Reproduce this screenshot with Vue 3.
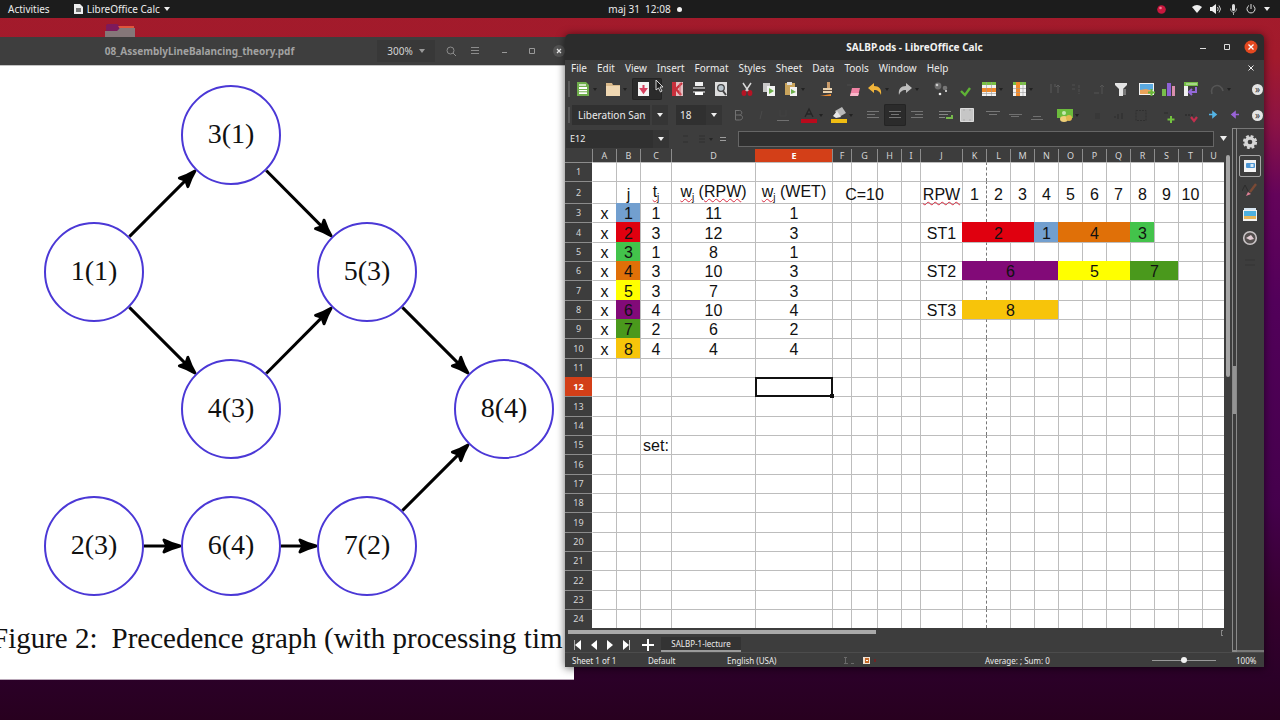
<script setup>
import { computed } from 'vue'

const R = 50
const nodes = {
  1: { x: 94, y: 272, label: '1(1)' },
  2: { x: 94, y: 546, label: '2(3)' },
  3: { x: 231, y: 135, label: '3(1)' },
  4: { x: 231, y: 409, label: '4(3)' },
  5: { x: 367, y: 272, label: '5(3)' },
  6: { x: 231, y: 546, label: '6(4)' },
  7: { x: 367, y: 546, label: '7(2)' },
  8: { x: 504, y: 409, label: '8(4)' }
}
const links = [[1, 3], [1, 4], [3, 5], [4, 5], [5, 8], [2, 6], [6, 7], [7, 8]]
const edges = computed(() => links.map(([a, b]) => {
  const p = nodes[a], q = nodes[b]
  const d = Math.hypot(q.x - p.x, q.y - p.y)
  const ux = (q.x - p.x) / d, uy = (q.y - p.y) / d
  return {
    x1: p.x + ux * R, y1: p.y + uy * R,
    x2: q.x - ux * (R + 10), y2: q.y - uy * (R + 10),
    head: `translate(${q.x - ux * (R + 1)} ${q.y - uy * (R + 1)}) rotate(${Math.atan2(uy, ux) * 180 / Math.PI})`
  }
}))

const menus = ['File', 'Edit', 'View', 'Insert', 'Format', 'Styles', 'Sheet', 'Data', 'Tools', 'Window', 'Help']

const lines = (a, b, c, d) => `<path d="M${a} 4.500H${b}M${c} 7.500H${d}M${a} 10.500H${b}" stroke="#757575" stroke-width="1"/>`
const icons = {
  bold: '<path d="M4.500 3v10M4.500 3.500h4c3 0 3 4.500 0 4.500h-4M8.500 8c4 0 4 5 0 5h-4" stroke="#727272" fill="none"/>',
  new: '<path d="M2 1h9l3 3v11H2z" fill="#6fae4c"/><path d="M4 3h7v2H4z" fill="#cfe5c2"/><path d="M4 6h8v7H4z" fill="#fff"/><path d="M4 8.500h8M4 10.800h8" stroke="#6fae4c"/>',
  open: '<path d="M1 2h6l1 2h7v11H1z" fill="#d9b98a"/><path d="M1 5h14v10H1z" fill="#efd7b2"/>',
  save: '<path d="M3 1h11v14H3z" fill="#f4f4f4"/><path d="M8.500 4v5M6 8l2.500 3.500L11 8z" stroke="#d8405f" stroke-width="2" fill="#d8405f"/>',
  pdf: '<path d="M3 1h11v14H3z" fill="#e3bfc2"/><path d="M3 1h4v14H3z" fill="#c9303c"/><path d="M13 2L7 8l5 6" stroke="#c9303c" stroke-width="2.400" fill="none"/><path d="M11 2v12" stroke="#d9606a"/>',
  print: '<path d="M4 1h8v4H4z" fill="#f0f0f0"/><path d="M2 6h12v6H2z" fill="#9a9a9a"/><path d="M2 8h12v2H2z" fill="#333"/><path d="M4 11h8v3H4z" fill="#fff"/>',
  preview: '<path d="M2 1h12v14H2z" fill="#dedede"/><circle cx="8" cy="7" r="3.300" fill="#b8c4cc" stroke="#444" stroke-width="1.300"/><path d="M10 10l3 4" stroke="#444" stroke-width="2"/>',
  cut: '<path d="M4 2l6 9M12 2L6 11" stroke="#d8d8d8" stroke-width="1.500"/><ellipse cx="5" cy="12" rx="2.400" ry="3" fill="#b51424"/><ellipse cx="11" cy="12" rx="2.400" ry="3" fill="#b51424"/>',
  copy: '<path d="M2 2h7v9H2z" fill="#c9c9c9"/><path d="M6 5h8v10H6z" fill="#f3f3f3"/><path d="M8 7l5 3-5 3z" fill="#6cae49"/>',
  paste: '<path d="M2 2h10v12H2z" fill="#c9a45c"/><path d="M4 1h5v3H4z" fill="#ddd"/><path d="M7 6h7v9H7z" fill="#f3f3f3"/><path d="M8 8l5 3-5 2z" fill="#6cae49"/>',
  clone: '<path d="M8 1h3v6H8z" fill="#c99b6a"/><path d="M4 7h9v5H4z" fill="#e8d2b0"/><path d="M4 9h9v1H4z" fill="#5a4a3a"/><path d="M1 15h11v-2z" fill="#ec8a2f"/>',
  clear: '<path d="M7 7h8l-2 8H5z" fill="#f083a4"/><path d="M6 12h8l-1 3H5z" fill="#fbb6c9"/><path d="M2 4h5" stroke="#4c4c4c"/>',
  undo: '<path d="M1 7l6-5v3c5 0 8 3 7 9-1-3-3-5-7-5v3z" fill="#f1b43a"/>',
  redo: '<path d="M15 7L9 2v3C4 5 1 8 2 14c1-3 3-5 7-5v3z" fill="#bdbdbd"/>',
  find: '<circle cx="5" cy="5" r="3.400" fill="#6e6e6e"/><circle cx="4" cy="4" r="1.300" fill="#ccc"/><circle cx="12" cy="7" r="2.300" fill="#777"/><circle cx="7" cy="13" r="1.300" fill="#eee"/><circle cx="13" cy="10" r="1" fill="#eee"/>',
  spell: '<path d="M4 10l4 4 5-7" stroke="#5fb336" stroke-width="2.400" fill="none"/>',
  row: '<path d="M1 1h14v14H1z" fill="#f2f2f2"/><path d="M1 1h14v3H1z" fill="#79c143"/><path d="M1 7h14v4H1z" fill="#f08b2c"/><path d="M5.500 1v14M10.500 1v14M1 12.500h14" stroke="#9b9b9b" stroke-width=".6"/>',
  col: '<path d="M2 1h13v14H2z" fill="#f2f2f2"/><path d="M2 1h13v3H2z" fill="#79c143"/><path d="M5 1h4v14H5z" fill="#f08b2c"/><path d="M2 7.500h13M2 11.500h13M12 1v14" stroke="#9b9b9b" stroke-width=".6"/>',
  sort: '<path d="M4 3v9M8 6V3M11 12V4M9 6l2-2 2 2" stroke="#5b5b5b" fill="none"/>',
  asc: '<path d="M3 4h3M3 8h3M10 4v9" stroke="#505050" stroke-dasharray="3 1"/>',
  desc: '<path d="M3 12h5M11 13V4M9 6l2-2 2 2" stroke="#555" fill="none"/>',
  filter: '<path d="M2 2h12v2l-4 4v7H6V8L2 4z" fill="#e4e4e4"/><path d="M10 8h3v6h-3z" fill="#777"/>',
  image: '<path d="M0 2h15v12H0z" fill="#f3f3f3"/><path d="M1 3h13v6H1z" fill="#5aa9e0"/><path d="M1 9l6-1 7 2v3H1z" fill="#e9a25a"/><path d="M12.500 8v7M9 11.500h7" stroke="#65b83a" stroke-width="2"/>',
  chart: '<path d="M1 8h4v7H1z" fill="#78bd4a"/><path d="M6 2h4v13H6z" fill="#8e62d6"/><path d="M11 5h3v10h-3z" fill="#d98fae"/>',
  pivot: '<path d="M1 1h14v4H1z" fill="#75bd46"/><path d="M1 5h4v10H1z" fill="#f0f0f0"/><path d="M3 3h11" stroke="#d7efc9"/><path d="M13 6v5H7M9 8l-3 3 3 3" stroke="#9369d8" stroke-width="2" fill="none"/>',
  omega: '<path d="M3 13c-3-9 9-12 11-3" stroke="#555" stroke-width="1.600" fill="none"/>',
  italic: '<path d="M9 4l-2 8" stroke="#4a4a4a"/>',
  underline: '<path d="M2 13.500h12" stroke="#707070"/><path d="M5 3v6h6V3" stroke="#424242" fill="none"/>',
  color: '<path d="M4 10l4-8 4 8M5.500 7h5" stroke="#252525" fill="none" stroke-width="1.300"/><path d="M0 12h16v4H0z" fill="#b90a1c"/>',
  hilite: '<path d="M4 4l7-4 4 6-7 4z" fill="#b9b9b9"/><path d="M2 9l4-5 4 6-5 1z" fill="#e8e8e8"/><path d="M0 12h16v4H0z" fill="#f0bd12"/>',
  left: lines(2, 14, 2, 10), center: lines(2, 14, 4, 12), right: lines(2, 14, 6, 14),
  wrap: '<path d="M2 4.500h12M2 7.500h9M2 10.500h6" stroke="#858585"/><path d="M15 8v3H9" stroke="#76b84b" stroke-width="2" fill="none"/>',
  merge: '<path d="M1.500 1.500h13v13h-13z" fill="#c6c6c6" stroke="#dcdcdc"/><path d="M5 2v2M11 2v2M5 12v2M11 12v2" stroke="#aaa"/>',
  top: '<path d="M1 4.500h14M4 7.500h8" stroke="#777"/>',
  middle: '<path d="M2 7.500h13M4 9.500h8" stroke="#707070"/>',
  bottom: '<path d="M4 9.500h8M2 12.500h12" stroke="#707070"/>',
  money: '<path d="M0 2h16v9H0z" fill="#6cbb3d"/><circle cx="7" cy="6" r="2" fill="#c7e9b2"/><ellipse cx="7" cy="12" rx="4" ry="3" fill="#efcf78"/><ellipse cx="12" cy="11" rx="3" ry="3" fill="#e0b850"/>',
  percent: '<path d="M6 6h5v6H6z" fill="#383838"/>',
  number: '<path d="M3 10h2M7 7v5M11 6v6" stroke="#2d2d2d"/>',
  date: '<path d="M3 3.500h10v10H3z" stroke="#303030" fill="none" stroke-dasharray="2 1"/>',
  adddec: '<path d="M10 9v7M6.500 12.500h7" stroke="#73c23f" stroke-width="2"/><path d="M3 6h4" stroke="#2c2c2c"/>',
  deldec: '<path d="M8 10l3 4 3-4" stroke="#c22f4e" stroke-width="2.200" fill="none"/><path d="M2 8h8" stroke="#252525" stroke-dasharray="2 1"/>',
  indent: '<path d="M4 7.500h5M8 5l3 2.500L8 10z" stroke="#54b4e6" stroke-width="1.600" fill="#54b4e6"/>',
  outdent: '<path d="M7 7.500h5M8 5L5 7.500 8 10z" stroke="#9a63d8" stroke-width="1.600" fill="#9a63d8"/>',
  gear: '<circle cx="8" cy="8" r="5.600" fill="#d6d6d6" stroke="#d6d6d6" stroke-width="3" stroke-dasharray="2.600 1.800"/><circle cx="8" cy="8" r="2.300" fill="#3d3d3d"/>',
  props: '<path d="M2 2h12v12H2z" fill="#f4f4f4"/><rect x="4" y="5" width="9" height="5" rx="1" fill="#4d96d3"/><path d="M8.500 6h3v3h-3z" fill="#d4e8f7"/>',
  styles: '<path d="M0 9l3-6 3 6" stroke="#2c2c2c" fill="none"/><path d="M14 2L8 10" stroke="#7b4a35" stroke-width="2.400"/><path d="M4 14l2-4 3 2z" fill="#e08097"/>',
  gallery: '<path d="M2 2h12v11H2z" fill="#d7e6f2"/><path d="M1 4h14v11H1z" fill="#f3f3f3"/><path d="M2 5h12v5H2z" fill="#4fb1e0"/><path d="M2 10h12v3H2z" fill="#e9b65a"/>',
  nav: '<circle cx="8" cy="8" r="6.300" fill="#55504f" stroke="#c9c4c6" stroke-width="1.600"/><path d="M4 8l5-3 3 4-4 1z" fill="#e3cdd4"/>',
  fn: '<path d="M3 6h10M3 11h10" stroke="#343434"/>'
}
const gap = (n) => ({ gap: n })
const I = (icon, label, drop, on) => ({ icon, label, drop, on })
const bar1 = [
  I('new', 'New', 1), I('open', 'Open', 1), I('save', 'Save', 1, 1), gap(4),
  I('pdf', 'Export as PDF'), I('print', 'Print'), I('preview', 'Print preview'), gap(4),
  I('cut', 'Cut'), I('copy', 'Copy'), I('paste', 'Paste', 1), gap(6),
  I('clone', 'Clone formatting'), gap(4), I('clear', 'Clear formatting'),
  I('undo', 'Undo', 1), I('redo', 'Redo', 1), gap(6),
  I('find', 'Find'), gap(2), I('spell', 'Spelling'), gap(2),
  I('row', 'Row', 1), I('col', 'Column', 1), gap(6),
  I('sort', 'Sort'), I('asc', 'Sort ascending'), I('desc', 'Sort descending'), I('filter', 'AutoFilter'), gap(4),
  I('image', 'Insert image'), I('chart', 'Insert chart'), I('pivot', 'Pivot table'), gap(4),
  I('omega', 'Special character', 1)
]
const bar2 = [
  I('bold', 'Bold'), I('italic', 'Italic'), I('underline', 'Underline'), gap(4),
  I('color', 'Font color', 1), I('hilite', 'Highlighting', 1), gap(4),
  I('left', 'Align left'), I('center', 'Align center', 0, 1), I('right', 'Align right'), gap(6),
  I('wrap', 'Wrap text'), I('merge', 'Merge cells'), gap(4),
  I('top', 'Align top'), I('middle', 'Center vertically'), I('bottom', 'Align bottom'), gap(6),
  I('money', 'Currency', 1), gap(2),
  I('percent', 'Percent'), I('number', 'Number'), I('date', 'Date'), gap(6),
  I('adddec', 'Add decimal place'), I('deldec', 'Delete decimal place'),
  I('indent', 'Increase indent'), I('outdent', 'Decrease indent')
]
const side = [
  { icon: 'gear', label: 'Sidebar settings' }, { icon: 'props', label: 'Properties', on: true },
  { icon: 'styles', label: 'Styles' }, { icon: 'gallery', label: 'Gallery' },
  { icon: 'nav', label: 'Navigator' }, { icon: 'fn', label: 'Functions' }
]

const cols = [
  ['A', 24], ['B', 24], ['C', 31], ['D', 84], ['E', 77], ['F', 19], ['G', 26], ['H', 24], ['I', 19], ['J', 42],
  ['K', 24], ['L', 24], ['M', 24], ['N', 24], ['O', 24], ['P', 24], ['Q', 24], ['R', 24], ['S', 24], ['T', 24], ['U', 22]
]
const fill = {
  1: '#729fcf', 2: '#e0000f', 3: '#43c34b', 4: '#e07008', 5: '#ffff00', 6: '#820a78', 7: '#4a991c', 8: '#f7c40a'
}
const jobs = [[1, 11, 1], [3, 12, 3], [1, 8, 1], [3, 10, 3], [3, 7, 3], [4, 10, 4], [2, 6, 2], [4, 4, 4]]
const cells = {
  B2: { t: 'j' }, C2: { t: 't', sub: 'j', sp: 1 },
  D2: { t: 'w', sub: 'j', sp: 1, rest: 'RPW', restSp: 1 }, E2: { t: 'w', sub: 'j', sp: 1, rest: 'WET' },
  G2: { t: 'C=10' }, J2: { t: 'RPW', sp: 1 },
  J4: { t: 'ST1' }, J6: { t: 'ST2' }, J8: { t: 'ST3' },
  K4: { t: 2, span: 3, bg: fill[2] }, N4: { t: 1, bg: fill[1] }, O4: { t: 4, span: 3, bg: fill[4] }, R4: { t: 3, bg: fill[3] },
  K6: { t: 6, span: 4, bg: fill[6] }, O6: { t: 5, span: 3, bg: fill[5] }, R6: { t: 7, span: 2, bg: fill[7] },
  K8: { t: 8, span: 4, bg: fill[8] },
  C15: { t: 'set:' }
}
jobs.forEach(([t, rpw, wet], i) => {
  const r = i + 3
  cells['A' + r] = { t: 'x' }
  cells['B' + r] = { t: i + 1, bg: fill[i + 1] }
  cells['C' + r] = { t }
  cells['D' + r] = { t: rpw }
  cells['E' + r] = { t: wet }
})
for (let n = 1; n <= 10; n++) cells[cols[n + 9][0] + '2'] = { t: n }

const rows = Array.from({ length: 24 }, (_, i) => {
  const out = []
  for (let c = 0; c < cols.length;) {
    const key = cols[c][0] + (i + 1)
    const cell = cells[key] || {}
    out.push({ key, col: cols[c][0], ...cell })
    c += cell.span || 1
  }
  return { n: i + 1, cells: out }
})
</script>

<template>
  <div class="desktop">
    <header class="topbar">
      <div class="tb-left">
        <button class="plain">Activities</button>
        <button class="plain app">
          <svg width="9" height="10" viewBox="0 0 9 10"><path d="M0 0h6l3 3v7H0z" fill="#eee" /><path d="M2 4h5v4H2z" fill="#777" /></svg>
          LibreOffice Calc
          <svg width="6" height="4" viewBox="0 0 6 4"><path d="M0 0h6L3 4z" fill="#eee" /></svg>
        </button>
      </div>
      <button class="plain clock">maj 31&nbsp; 12:08 <i class="dot"></i></button>
      <div class="tb-right">
        <svg class="rec" width="9" height="9" viewBox="0 0 9 9"><circle cx="4.500" cy="4.500" r="4.300" fill="#c8173d" /><circle cx="3.500" cy="3" r="1.300" fill="#ee7f95" /></svg>
        <svg width="10" height="10" viewBox="0 0 10 10"><path d="M0 3q5-4 10 0L5 9z" fill="#eee" /></svg>
        <svg width="11" height="10" viewBox="0 0 11 10"><path d="M0 3h2l4-3v10L2 7H0z" fill="#eee" /><path d="M7.500 3q1.500 2 0 4M9 1.500q3 3.500 0 7" stroke="#ccc" fill="none" /></svg>
        <svg width="9" height="11" viewBox="0 0 9 11"><rect x="3" y="0" width="3" height="7" rx="1.500" fill="#ddd" /><path d="M1.500 4.500c0 5 6 5 6 0M4.500 8v3" stroke="#aaa" fill="none" /></svg>
        <svg width="10" height="10" viewBox="0 0 10 10"><path d="M3 1.500a4 4 0 1 0 4 0M5 0v5" stroke="#ddd" fill="none" /></svg>
        <svg width="6" height="4" viewBox="0 0 6 4"><path d="M0 0h6L3 4z" fill="#eee" /></svg>
      </div>
    </header>

    <svg class="folder" width="30" height="18" viewBox="0 0 30 18"><path d="M1 3q0-2 2-2h9l3 2h14v6H1z" fill="#7d1a5c" /><path d="M13 3h16v3H15z" fill="#e0553c" /><path d="M0 8h12l3-3h15v13H0z" fill="#857779" /></svg>

    <section class="pdf">
      <div class="pdf-head">
        <span class="pdf-title">08_AssemblyLineBalancing_theory.pdf</span>
        <button class="zoom">300% <svg width="6" height="4" viewBox="0 0 6 4"><path d="M0 0h6L3 4z" fill="#999" /></svg></button>
        <button class="hb" aria-label="Search"><svg width="10" height="10" viewBox="0 0 10 10"><circle cx="4.500" cy="4.500" r="3.500" fill="none" stroke="#8c8c8c" /><path d="M7 7l3 3" stroke="#8c8c8c" /></svg></button>
        <button class="hb first" aria-label="Menu"><svg width="8" height="8" viewBox="0 0 8 8"><path d="M0 .5h8M0 3.500h8M0 6.500h8" stroke="#8c8c8c" /></svg></button>
        <button class="hb wide" aria-label="Minimize"><svg width="6" height="8" viewBox="0 0 6 8"><path d="M0 5.500h5" stroke="#999" /></svg></button>
        <button class="hb wide" aria-label="Maximize"><svg width="6" height="6" viewBox="0 0 6 6"><path d="M.5.500h5v5h-5z" stroke="#999" fill="none" /></svg></button>
        <button class="hb wide" aria-label="Close"><svg width="12" height="12" viewBox="0 0 12 12"><circle cx="6" cy="6" r="6" fill="#545454" /><path d="M4 4l4 4M8 4L4 8" stroke="#eee" stroke-width="1.200" /></svg></button>
      </div>
      <div class="page">
        <svg class="graph" width="574" height="540" viewBox="0 65 574 540">
          <g v-for="(e, i) in edges" :key="i">
            <line :x1="e.x1" :y1="e.y1" :x2="e.x2" :y2="e.y2" stroke="#000" stroke-width="3" />
            <path d="M0 0Q-8 -2 -16 -6L-13 0L-16 6Q-8 2 0 0Z" :transform="e.head" stroke="#000" stroke-width="3" stroke-linejoin="round" />
          </g>
          <g v-for="n in nodes" :key="n.label">
            <circle :cx="n.x" :cy="n.y" :r="R - 1" fill="#fff" stroke="#4b38d6" stroke-width="2" />
            <text :x="n.x" :y="n.y + 8" text-anchor="middle" class="ntext">{{ n.label }}</text>
          </g>
        </svg>
        <p class="caption"><span>Figure 2:</span><span>Precedence graph (with processing tim</span></p>
      </div>
    </section>

    <section class="calc">
      <div class="titlebar">
        <span class="title">SALBP.ods - LibreOffice Calc</span>
        <div class="winbtns">
          <button class="hb" aria-label="Minimize"><svg width="7" height="8" viewBox="0 0 7 8"><path d="M0 5.500h6" stroke="#ddd" /></svg></button>
          <button class="hb" aria-label="Maximize"><svg width="6" height="6" viewBox="0 0 6 6"><path d="M.5.500h5v5h-5z" stroke="#ddd" fill="none" /></svg></button>
          <button class="hb" aria-label="Close"><svg width="14" height="14" viewBox="0 0 14 14"><circle cx="7" cy="7" r="6.500" fill="#e4481f" /><path d="M4.500 4.500l5 5M9.500 4.500l-5 5" stroke="#fff" stroke-width="1.300" /></svg></button>
        </div>
      </div>
      <nav class="menubar">
        <button v-for="m in menus" :key="m" class="plain">{{ m }}</button>
        <button class="plain docx" aria-label="Close document"><svg width="6" height="6" viewBox="0 0 6 6"><path d="M.5.500l5 5M5.500.500l-5 5" stroke="#eee" /></svg></button>
      </nav>
      <div class="toolbar">
        <i class="grip"></i>
        <template v-for="(b, i) in bar1" :key="i">
          <i v-if="b.gap" :style="{ width: b.gap + 'px' }" class="sp"></i>
          <button v-else class="tool" :class="{ drop: b.drop, on: b.on }" :aria-label="b.label">
            <svg width="16" height="16" viewBox="0 0 16 16" fill="none" v-html="icons[b.icon]"></svg>
            <svg v-if="b.drop" class="car" width="4" height="3" viewBox="0 0 4 3"><path d="M0 0h4L2 3z" fill="#222" /></svg>
          </button>
        </template>
        <button class="more" aria-label="More">»</button>
      </div>
      <div class="toolbar">
        <i class="grip"></i>
        <div class="combo font">
          <input aria-label="Font name" value="Liberation Sans" />
          <button aria-label="Font list"><svg width="6" height="4" viewBox="0 0 6 4"><path d="M0 0h6L3 4z" fill="#eee" /></svg></button>
        </div>
        <div class="combo size">
          <input aria-label="Font size" value="18" />
          <button aria-label="Size list"><svg width="6" height="4" viewBox="0 0 6 4"><path d="M0 0h6L3 4z" fill="#eee" /></svg></button>
        </div>
        <template v-for="(b, i) in bar2" :key="i">
          <i v-if="b.gap" :style="{ width: b.gap + 'px' }" class="sp"></i>
          <button v-else class="tool" :class="{ drop: b.drop, on: b.on }" :aria-label="b.label">
            <svg width="16" height="16" viewBox="0 0 16 16" fill="none" v-html="icons[b.icon]"></svg>
            <svg v-if="b.drop" class="car" width="4" height="3" viewBox="0 0 4 3"><path d="M0 0h4L2 3z" fill="#222" /></svg>
          </button>
        </template>
        <button class="more" aria-label="More">»</button>
      </div>

      <div class="work">
        <div class="main">
          <div class="formula">
            <div class="combo name">
              <input aria-label="Name box" value="E12" />
              <button aria-label="Names"><svg width="6" height="4" viewBox="0 0 6 4"><path d="M0 0h6L3 4z" fill="#eee" /></svg></button>
            </div>
            <div class="fx">
              <svg width="46" height="10" viewBox="0 0 46 10"><path d="M2 2h5M2 8h5M18 2h6M18 5h6M18 8h6" stroke="#303030" /><path d="M28 4h4l-2 3z" fill="#262626" /><path d="M39 3.500h6M39 6.500h6" stroke="#9c9c9c" /></svg>
            </div>
            <input class="finput" aria-label="Formula" />
            <button class="expand" aria-label="Expand formula bar"><svg width="7" height="5" viewBox="0 0 7 5"><path d="M0 0h7L3.500 5z" fill="#eee" /></svg></button>
          </div>
          <div class="sheetwrap">
            <div class="sheet">
              <table>
                <colgroup>
                  <col class="rh" />
                  <col v-for="c in cols" :key="c[0]" :style="{ width: c[1] + 'px' }" />
                </colgroup>
                <thead>
                  <tr><th></th><th v-for="c in cols" :key="c[0]" scope="col" :class="{ sel: c[0] === 'E' }">{{ c[0] }}</th></tr>
                </thead>
                <tbody>
                  <tr v-for="r in rows" :key="r.n">
                    <th scope="row" :class="{ sel: r.n === 12 }">{{ r.n }}</th>
                    <td
                      v-for="c in r.cells" :key="c.key" :colspan="c.span || 1"
                      :class="{ brk: c.col === 'L', active: c.key === 'E12' }"
                      :style="c.bg ? { backgroundColor: c.bg, borderColor: c.bg } : null"
                    >
                      <div v-if="c.t !== undefined" class="v" :class="{ high: c.sub }">
                        <span :class="{ wavy: c.sp }">{{ c.t }}<span v-if="c.sub" class="sub">{{ c.sub }}</span></span>
                        <span v-if="c.rest">&nbsp;(<span :class="{ wavy: c.restSp }">{{ c.rest }}</span>)</span>
                      </div>
                    </td>
                  </tr>
                </tbody>
              </table>
            </div>
            <div class="vscroll"><i></i></div>
          </div>
          <div class="hscroll"><i></i><b></b></div>
          <div class="tabs">
            <button class="plain" aria-label="First sheet"><svg width="7" height="10" viewBox="0 0 7 10"><path d="M.5 0v10" stroke="#aaa" /><path d="M7 0v10L1 5z" fill="#fff" /></svg></button>
            <button class="plain" aria-label="Previous sheet"><svg width="6" height="10" viewBox="0 0 6 10"><path d="M6 0v10L0 5z" fill="#fff" /></svg></button>
            <button class="plain" aria-label="Next sheet"><svg width="6" height="10" viewBox="0 0 6 10"><path d="M0 0v10l6-5z" fill="#fff" /></svg></button>
            <button class="plain" aria-label="Last sheet"><svg width="7" height="10" viewBox="0 0 7 10"><path d="M6.500 0v10" stroke="#ccc" /><path d="M0 0v10l6-5z" fill="#fff" /></svg></button>
            <button class="plain add" aria-label="Add sheet"><svg width="12" height="12" viewBox="0 0 12 12"><path d="M6 0v12M0 6h12" stroke="#fff" stroke-width="2" /></svg></button>
            <button class="tab">SALBP-1-lecture</button>
          </div>
        </div>
        <div class="splitter"><i></i></div>
        <aside class="side">
          <button v-for="s in side" :key="s.icon" :class="{ on: s.on }" :aria-label="s.label">
            <svg width="16" height="16" viewBox="0 0 16 16" fill="none" v-html="icons[s.icon]"></svg>
          </button>
        </aside>
      </div>
      <footer class="status">
        <span>Sheet 1 of 1</span><span>Default</span><span>English (USA)</span>
        <span class="marks">
          <svg width="11" height="7" viewBox="0 0 11 7"><path d="M0 .5h3M1.500 0v6M0 6.500h4M7 6.500h3" stroke="#6a6a6a" /></svg>
          <svg width="14" height="7" viewBox="0 0 14 7"><path d="M0 0h7v7H0z" fill="#f0e2d4" /><path d="M2 1h4v5H2z" fill="#c66a2a" /><path d="M3 3h2v1H3z" fill="#fff" /><path d="M11 2h2v3h-2z" fill="#6e2424" /></svg>
        </span>
        <span class="avg">Average: ; Sum: 0</span>
        <input type="range" aria-label="Zoom" min="0" max="100" value="50" />
        <span class="pct">100%</span>
      </footer>
    </section>

    <svg class="cursor" width="10" height="14" viewBox="0 0 10 14"><path d="M1 1v10l2.500-2 2 4 1.500-1-2-4h3z" fill="#1c1c1c" stroke="#e8e8e8" stroke-width=".9" /></svg>
  </div>
</template>

<style>
body { margin: 0; }
</style>

<style scoped>
.desktop {
  position: relative;
  min-height: 100vh;
  overflow: hidden;
  font-family: "Noto Sans", "Open Sans", sans-serif;
  font-size: 10px;
  color: #ececec;
  background: linear-gradient(180deg, #a31b2b 0, #a21a2c 8%, #8c1344 17%, #64045a 27%, #52005a 42%, #45004c 70%, #35002e 84%, #2b0028 94%, #28001f 100%);
}
button, input { font: inherit; color: inherit; margin: 0; padding: 0; border: 0; background: none; box-sizing: border-box; }
button { display: flex; align-items: center; justify-content: center; white-space: nowrap; }
svg { display: block; flex: none; }

.topbar { display: grid; grid-template-columns: 1fr auto 1fr; align-items: center; height: 18px; padding: 0 10px 0 8px; background: #1c1c1c; }
.tb-left { display: flex; gap: 24px; }
.app { gap: 4px; }
.clock { gap: 6px; padding-left: 12px; }
.dot { width: 5px; height: 5px; border-radius: 50%; background: #f2f2f2; }
.tb-right { display: flex; align-items: center; justify-content: flex-end; gap: 8px; }
.rec { margin-right: 18px; }
.folder { position: absolute; left: 105px; top: 23px; }

.pdf { position: absolute; left: 0; right: 706px; top: 37px; bottom: 40px; display: flex; flex-direction: column; }
.pdf-head { display: flex; align-items: center; flex: none; height: 28px; background: #3e3e3e; padding-right: 2px; box-shadow: 0 1px 0 #c4c4c4; position: relative; }
.pdf-title { flex: 1; padding-left: 22px; text-align: center; font-weight: 700; color: #a2a2a2; }
.zoom { gap: 6px; width: 58px; height: 22px; background: #383838; color: #d4d4d4; margin-right: 4px; }
.hb { width: 24px; height: 20px; }
.hb.first { margin-right: 4px; }
.hb.wide { width: 27px; }
.page { flex: 1; background: #fff; overflow: hidden; border-bottom: 1px solid #b9a7b8; }
.ntext { font-family: "Liberation Serif", serif; font-size: 28px; fill: #111; }
.caption { display: flex; gap: 14px; margin: 16px 0 0 -8px; white-space: nowrap; font: 29px/34px "Liberation Serif", serif; color: #111; }

.calc { position: absolute; left: 565px; right: 16px; top: 34px; bottom: 53px; display: flex; flex-direction: column; background: #3d3d3d; border-radius: 5px 5px 0 0; box-shadow: 0 1px 8px rgba(0, 0, 0, .6); }
.titlebar { display: flex; align-items: center; justify-content: center; height: 26px; background: #2c2c2c; border-radius: 5px 5px 0 0; font-weight: 700; color: #f2f2f2; position: relative; }
.winbtns { position: absolute; right: 1px; top: 3px; display: flex; }
.menubar { display: flex; gap: 10px; height: 16px; padding: 0 10px 0 6px; }
.docx { margin-left: auto; }
.toolbar { display: flex; align-items: center; height: 26px; padding: 0 1px 0 3px; }
.grip { width: 2px; height: 16px; margin-right: 2px; background: #5a5a5a; }
.sp { flex: none; }
.tool { flex: none; width: 22px; height: 22px; }
.tool.drop { width: 30px; justify-content: flex-start; gap: 2px; padding-left: 3px; }
.tool.on { background: #2b2b2b; box-shadow: inset 0 0 0 1px #242424; border-radius: 2px; }
.more { margin-left: auto; width: 11px; height: 11px; border-radius: 50%; background: #e4e4e4; color: #333; line-height: 9px; font-size: 10px; }
.combo { display: flex; flex: none; }
.combo input { background: #303030; flex: 1; min-width: 0; height: 20px; padding-left: 4px; }
.combo button { width: 16px; height: 20px; background: #353535; }
.font { width: 96px; margin-right: 8px; }
.font input { margin-right: 2px; padding: 0 4px 0 6px; }
.size { width: 46px; margin-right: 6px; }

.work { display: flex; flex: 1; min-height: 0; }
.main { display: flex; flex-direction: column; flex: 1; min-width: 0; }
.formula { display: flex; align-items: center; height: 21px; }
.name { width: 103px; padding-left: 1px; font-size: 9px; }
.name input, .name button { height: 18px; }
.fx { width: 69px; display: flex; justify-content: center; }
.finput { flex: 1; min-width: 0; height: 16px; background: #303030; border: 1px solid #666; }
.expand { width: 18px; height: 16px; }
.sheetwrap { display: flex; flex: 1; min-height: 0; }
.sheet { flex: 1; min-width: 0; overflow: hidden; background: #fff; }
table { table-layout: fixed; border-spacing: 0; width: 100%; }
.rh { width: 27px; }
th, td { padding: 0; box-sizing: border-box; }
th { background: #3d3d3d; color: #d6d6d6; font-size: 9px; line-height: 12px; font-weight: 400; }
thead th { height: 13px; border-left: 1px solid #8c8c8c; }
thead th:first-child { border-left: 0; }
tbody th { border-top: 1px solid #8c8c8c; }
th.sel { background: #d33f18; color: #fff; font-weight: 700; border-color: #d33f18; }
tbody tr { height: 19px; }
tbody tr:nth-child(2) { height: 22px; }
tbody tr:nth-child(3n + 4) { height: 20px; }
td { border-left: 1px solid #bdbdbd; border-top: 1px solid #bdbdbd; vertical-align: bottom; color: #111; font: 16px/17px "Liberation Sans", Arial, sans-serif; }
td:nth-child(2) { border-left-color: #fff; }
td.brk { border-left: 1px dashed #777; }
td.active { position: relative; }
td.active::before { content: ""; position: absolute; inset: -1px; border: 2px solid #111; }
td.active::after { content: ""; position: absolute; right: -2px; bottom: -2px; width: 4px; height: 4px; background: #111; }
.v { display: flex; justify-content: center; white-space: nowrap; height: 17px; }
.v.high { height: 20px; }
.sub { font-size: 10px; position: relative; top: 4px; }
.wavy { text-decoration: underline wavy #d8293f 1px; text-underline-offset: 1px; }
.vscroll { width: 8px; padding: 6px 2px 0; box-sizing: border-box; }
.vscroll i { display: block; height: 47%; border-radius: 2px; background: #a5a5a5; }
.hscroll { display: flex; justify-content: space-between; height: 9px; padding: 2px 9px 0 3px; box-sizing: border-box; }
.hscroll i { width: 47%; height: 4px; background: #a9a9a9; }
.hscroll b { width: 2px; height: 6px; border: 1px solid #888; border-right: 0; box-sizing: border-box; }
.tabs { display: flex; align-items: center; height: 15px; padding-left: 9px; gap: 10px; }
.add { margin-left: 2px; }
.tab { height: 15px; width: 80px; margin-left: -3px; background: #333; border-bottom: 2px solid #9a9a9a; font-size: 8px; }
.splitter { width: 5px; box-sizing: border-box; border: 1px solid #8a8a8a; border-bottom-width: 2px; display: flex; align-items: center; }
.splitter i { width: 3px; height: 48px; background: #949494; }
.side { width: 27px; box-sizing: border-box; border-top: 1px solid #777; border-bottom: 2px solid #777; display: flex; flex-direction: column; align-items: center; gap: 2px; padding: 2px 2px 0 0; }
.side button { width: 22px; height: 22px; border-radius: 2px; }
.side button.on { border: 1px solid #a5a5a5; }
.status { display: grid; grid-template-columns: 76px 79px 121px 137px 1fr 80px 36px; align-items: center; height: 15px; padding-left: 7px; border-top: 1px solid #4c4c4c; box-sizing: border-box; font-size: 8px; white-space: nowrap; }
.marks { display: flex; gap: 8px; margin-left: -4px; }
.pct { padding-left: 8px; }
input[type="range"] { appearance: none; width: 64px; height: 8px; margin-left: 4px; background: linear-gradient(#999, #999) center / 100% 1px no-repeat; }
input[type="range"]::-webkit-slider-thumb { appearance: none; width: 6px; height: 6px; border-radius: 50%; background: #f2f2f2; }
.cursor { position: absolute; left: 655px; top: 79px; }
</style>
